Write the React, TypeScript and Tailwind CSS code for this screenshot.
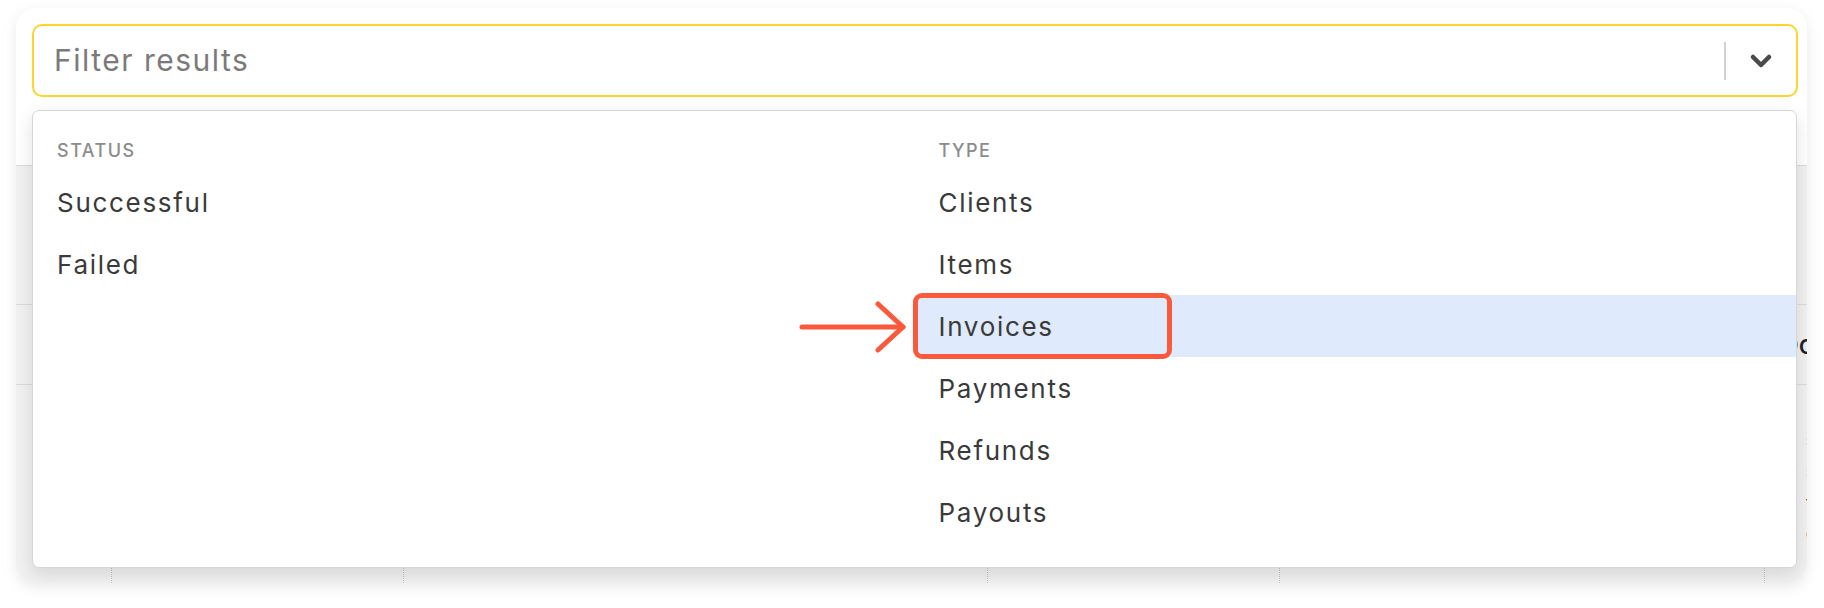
import { ChevronDown } from 'lucide-react';

type Group = {
  title: string;
  items: string[];
  active?: string;
};

const groups: Group[] = [
  { title: 'STATUS', items: ['Successful', 'Failed'] },
  { title: 'TYPE', items: ['Clients', 'Items', 'Invoices', 'Payments', 'Refunds', 'Payouts'], active: 'Invoices' },
];

// column widths of the results table that sits under the menu
const colWidths = ['w-[95px]', 'w-[292px]', 'w-[584px]', 'w-[292px]', 'w-[485px]'];

function TableRow({
  height,
  last,
  plain,
  children,
}: {
  height: string;
  last?: boolean;
  plain?: boolean;
  children?: React.ReactNode;
}) {
  const sep = plain ? '' : 'border-l border-dotted border-[#c4c4c4]';
  return (
    <div className={`flex ${height} ${last ? 'flex-1' : 'border-b border-[#dcdcdc]'} ${plain ? 'bg-white' : 'bg-[#f1f1f1]'}`}>
      {colWidths.map((w, i) => (
        <div key={i} className={`${w} shrink-0 ${i > 0 ? sep : ''}`} />
      ))}
      <div className={`flex-1 overflow-hidden ${sep}`}>{children}</div>
    </div>
  );
}

function Arrow() {
  return (
    <svg
      className="absolute left-[-116px] top-[6px] w-[108px] h-[52px]"
      viewBox="0 0 108 52"
      fill="none"
      stroke="#fa5a3b"
      strokeWidth={5}
      strokeLinecap="round"
      strokeLinejoin="round"
    >
      <path d="M3 26H104" />
      <path d="M79 3L104 26L79 49" />
    </svg>
  );
}

function FilterGroup({ group }: { group: Group }) {
  return (
    <div>
      <div className="h-[60px] pt-[30px] pl-6 text-[18px] leading-[20px] font-medium tracking-[1.5px] text-[#8c8c8c]">
        {group.title}
      </div>
      {group.items.map((item) => {
        const isActive = item === group.active;
        return (
          <div
            key={item}
            className={`relative h-[62px] flex items-center pl-6 text-[26px] tracking-[1.7px] text-[#3a3a3a] ${
              isActive ? 'bg-[#dfeafc]' : ''
            }`}
          >
            {item}
            {isActive && (
              <>
                <div className="absolute -left-[2px] -top-[2px] w-[259px] h-[66px] rounded-[9px] border-[5px] border-[#fa5a3b]" />
                <Arrow />
              </>
            )}
          </div>
        );
      })}
    </div>
  );
}

export default function App() {
  return (
    <div className="w-[1824px] h-[608px] bg-white font-['Inter',sans-serif] overflow-hidden">
      <div className="relative ml-4 mt-2 w-[1791px] h-[575px] rounded-[20px] bg-white shadow-[0_4px_14px_rgba(0,0,0,0.09)] overflow-hidden flex flex-col">
        {/* search field */}
        <div className="pl-4 pr-[9px] pt-4">
          <div className="h-[73px] rounded-[10px] border-2 border-[#fdd52c] flex items-center pl-5">
            <span className="flex-1 text-[30px] tracking-[1.5px] text-[#7a7a7a]">Filter results</span>
            <div className="w-[2px] h-[38px] bg-[#d2d2d2]" />
            <ChevronDown size={32} strokeWidth={3.4} className="mx-[19px] text-[#4a4a4a]" />
          </div>
        </div>

        {/* results table */}
        <div className="flex-1 flex flex-col">
          <TableRow height="h-[69px]" plain />
          <TableRow height="h-[139px]" />
          <TableRow height="h-[80px]">
            <div className="pl-[15px] h-full flex items-center text-[26px] font-medium text-[#222]">Done</div>
          </TableRow>
          <TableRow height="" last>
            <div className="pl-[41px] pt-[40px] text-[15px] leading-[31px] text-[#333]">
              <div>status</div>
              <div>settled</div>
              <div>total</div>
              <div>cycle</div>
            </div>
          </TableRow>
        </div>

        {/* filter menu */}
        <div className="absolute left-4 top-[102px] w-[1765px] h-[458px] rounded-[7px] border border-[#d6d6d6] bg-white shadow-[0_6px_18px_rgba(0,0,0,0.12)] grid grid-cols-2">
          {groups.map((g) => (
            <FilterGroup key={g.title} group={g} />
          ))}
        </div>
      </div>
    </div>
  );
}
